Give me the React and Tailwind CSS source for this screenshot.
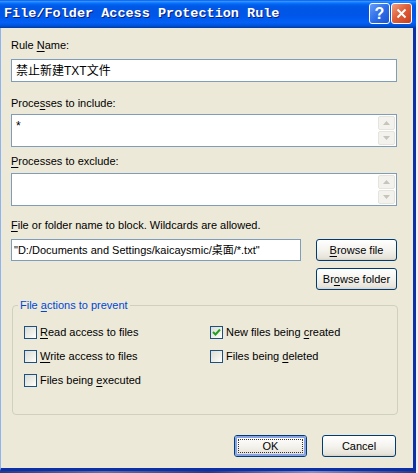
import React from "react";

const F = { fontFamily: '"Liberation Sans", "Noto Sans CJK SC", sans-serif' };

function U({ children }) {
  return <span className="underline underline-offset-[2px]">{children}</span>;
}

function ScrollArrows() {
  return (
    <div className="absolute right-[1px] top-[1px] bottom-[1px] w-[17px] flex flex-col gap-[1px]">
      {[0, 1].map((i) => (
        <div
          key={i}
          className="flex-1 rounded-[2px] border border-[#e6e4dc] bg-[#f3f2ec] flex items-center justify-center"
        >
          <svg width="7" height="4" viewBox="0 0 7 4">
            {i === 0 ? (
              <path d="M0 4 L3.5 0 L7 4 Z" fill="#c6c5bc" />
            ) : (
              <path d="M0 0 L3.5 4 L7 0 Z" fill="#c6c5bc" />
            )}
          </svg>
        </div>
      ))}
    </div>
  );
}

function XPButton({ children, w, focused }) {
  return (
    <div
      className={`h-[22px] rounded-[3px] border border-[#003c74] bg-[linear-gradient(to_bottom,#ffffff_0%,#f4f3ee_50%,#e6e3da_90%,#d6d0c5_100%)] flex items-center justify-center text-[11px] text-black ${w}`}
      style={F}
    >
      {focused ? (
        <div className="w-full h-full rounded-[2px] border-2 border-[#88a4e6] flex items-center justify-center">
          <div className="w-[calc(100%-2px)] h-[calc(100%-2px)] border border-dotted border-[#333] flex items-center justify-center">
            {children}
          </div>
        </div>
      ) : (
        children
      )}
    </div>
  );
}

function CheckBox({ checked, children }) {
  return (
    <div className="flex items-center h-[13px] gap-[3px]">
      <div className="w-[13px] h-[13px] border border-[#1c5180] bg-[linear-gradient(135deg,#dcdcd7_0%,#f0f0ea_60%,#ffffff_100%)] flex items-center justify-center shrink-0">
        {checked && (
          <svg width="9" height="9" viewBox="0 0 9 9">
            <path d="M1 4 L3.5 6.5 L8 1.5" stroke="#21a121" strokeWidth="2" fill="none" />
          </svg>
        )}
      </div>
      <span className="text-[11px] leading-[13px] text-black whitespace-nowrap" style={F}>
        {children}
      </span>
    </div>
  );
}

export default function App() {
  return (
    <div className="w-[418px] h-[473px] bg-[#eef3fb] overflow-hidden" style={F}>
      <div className="w-[416px] h-[471px] flex flex-col">
        {/* title bar */}
        <div className="h-[28px] shrink-0 flex items-center justify-between pl-[4px] pr-[4px] bg-[linear-gradient(to_bottom,#0058ee_0%,#3593ff_5%,#1580ff_9%,#0368f6_14%,#0058e6_22%,#0056e8_55%,#005cf2_70%,#0560f5_80%,#0056e0_90%,#0047c0_96%,#0038a0_100%)]">
          <span
            className="text-white font-bold text-[13.5px] [text-shadow:1px_1px_0_#0a2080]"
            style={{ fontFamily: '"Liberation Mono", monospace' }}
          >
            File/Folder Access Protection Rule
          </span>
          <div className="flex gap-[1px] mt-[-1px]">
            <div className="w-[21px] h-[21px] rounded-[3px] border border-white bg-[linear-gradient(135deg,#6a9cf8_0%,#2e6ee8_50%,#1b55d5_100%)] flex items-center justify-center">
              <span className="text-white font-bold text-[16px] leading-none" style={F}>?</span>
            </div>
            <div className="w-[21px] h-[21px] rounded-[3px] border border-white bg-[linear-gradient(135deg,#f0a080_0%,#e0603a_45%,#c8401e_100%)] flex items-center justify-center">
              <svg width="11" height="11" viewBox="0 0 11 11">
                <path d="M1.5 1.5 L9.5 9.5 M9.5 1.5 L1.5 9.5" stroke="white" strokeWidth="2" />
              </svg>
            </div>
          </div>
        </div>
        {/* body */}
        <div className="flex-1 flex flex-col bg-[#ece9d8] border-l border-l-[#8cb4f0] border-r-[3px] border-r-[#0c30a8] border-b-[3px] border-b-[#0c30a8] pl-[10px] pr-[15px] pt-[11px] text-[11px] text-black">
          <div className="leading-[13px]">
            Rule <U>N</U>ame:
          </div>
          <div className="mt-[7px] h-[23px] w-[386px] border border-[#7f9db9] bg-white flex items-center pl-[4px] text-[12px]">
            禁止新建TXT文件
          </div>

          <div className="mt-[15px] leading-[13px]">
            Proce<U>s</U>ses to include:
          </div>
          <div className="mt-[4px] h-[33px] w-[386px] border border-[#7f9db9] bg-white relative pl-[4px] pt-[2px]">
            <span className="text-[12px]">*</span>
            <ScrollArrows />
          </div>

          <div className="mt-[8px] leading-[13px]">
            <U>P</U>rocesses to exclude:
          </div>
          <div className="mt-[5px] h-[33px] w-[386px] border border-[#7f9db9] bg-white relative">
            <ScrollArrows />
          </div>

          <div className="mt-[13px] leading-[13px]">
            <U>F</U>ile or folder name to block. Wildcards are allowed.
          </div>
          <div className="mt-[7px] flex justify-between items-start w-[386px]">
            <div className="h-[22px] w-[290px] border border-[#7f9db9] bg-white flex items-center pl-[2px] whitespace-nowrap overflow-hidden">
              "D:/Documents and Settings/kaicaysmic/桌面/*.txt"
            </div>
            <div className="flex flex-col gap-[7px]">
              <XPButton w="w-[81px]">
                <span>
                  <U>B</U>rowse file
                </span>
              </XPButton>
              <XPButton w="w-[81px]">
                <span>
                  Br<U>o</U>wse folder
                </span>
              </XPButton>
            </div>
          </div>

          {/* group box */}
          <div className="mt-[15px] ml-[1px] w-[386px] h-[110px] border border-[#d0d0bf] rounded-[4px] relative pl-[11px] pt-[20px]">
            <div className="absolute left-[5px] top-[-7px] bg-[#ece9d8] px-[2px] leading-[13px] text-[#0046d5]">
              File <U>a</U>ctions to prevent
            </div>
            <div className="grid grid-cols-[186px_1fr] gap-y-[11px]">
              <CheckBox>
                <U>R</U>ead access to files
              </CheckBox>
              <CheckBox checked>
                New files being <U>c</U>reated
              </CheckBox>
              <CheckBox>
                <U>W</U>rite access to files
              </CheckBox>
              <CheckBox>
                Files being <U>d</U>eleted
              </CheckBox>
              <CheckBox>
                Files being <U>e</U>xecuted
              </CheckBox>
            </div>
          </div>

          <div className="mt-[20px] flex justify-end gap-[15px] w-[385px]">
            <XPButton w="w-[73px]" focused>
              OK
            </XPButton>
            <XPButton w="w-[74px]">Cancel</XPButton>
          </div>
        </div>
      </div>
      <div className="h-[2px] w-[416px] bg-[linear-gradient(to_right,#2a3a80,#6070a0,#2a3a80,#8090c0,#2a3a80)]" />
    </div>
  );
}
